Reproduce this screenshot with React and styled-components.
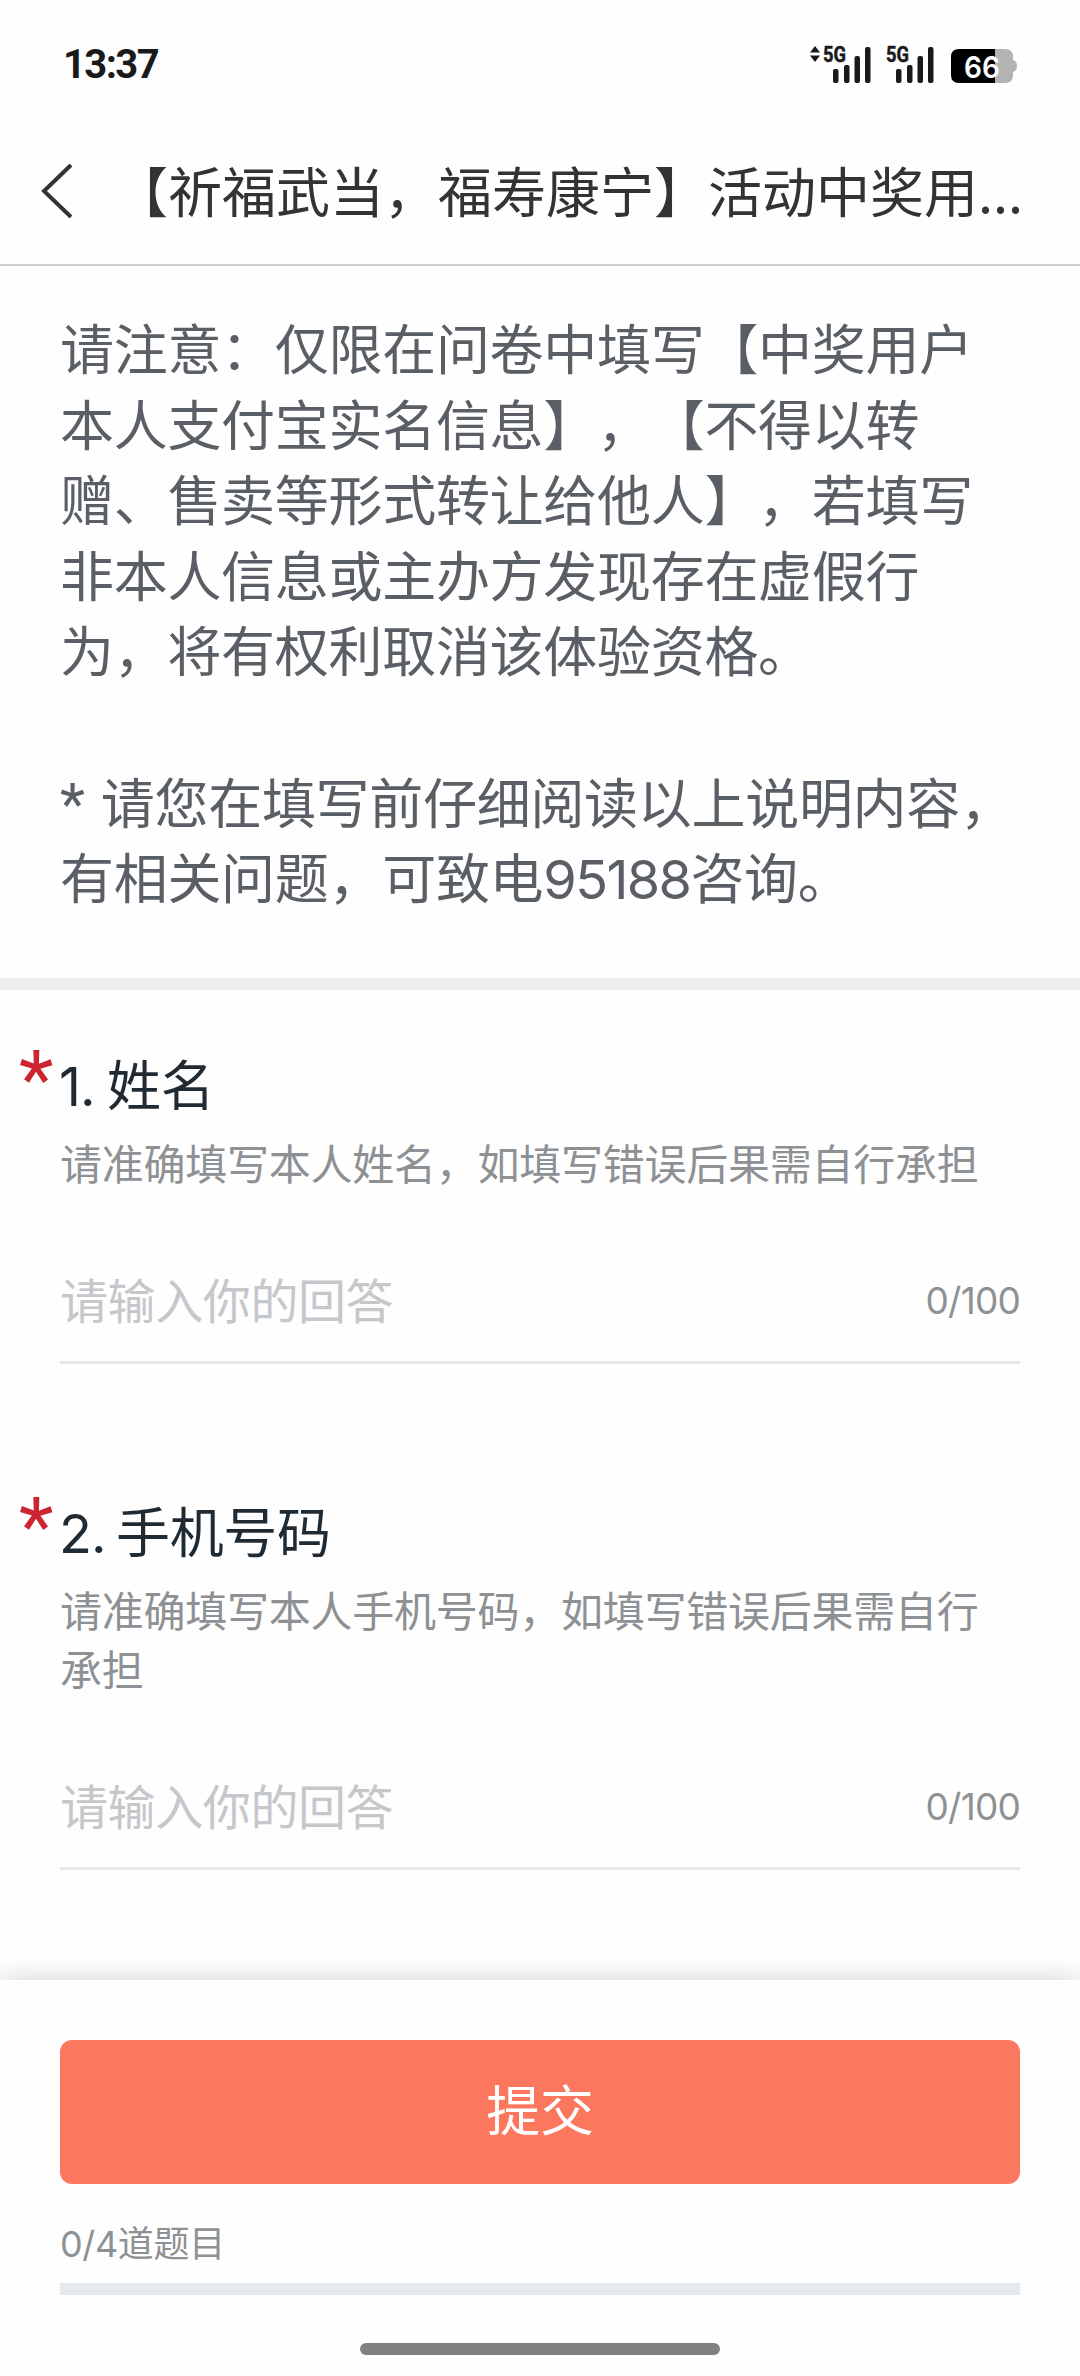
import React from 'react';
import styled, { createGlobalStyle } from 'styled-components';

const GlobalStyle = createGlobalStyle`
  * {
    box-sizing: border-box;
  }
  body {
    margin: 0;
    background: #fefefe;
    font-family: 'Noto Sans CJK SC', 'Liberation Sans', sans-serif;
    text-spacing-trim: space-all;
  }
`;

const Page = styled.div`
  width: 1080px;
  height: 2376px;
  display: flex;
  flex-direction: column;
  overflow: hidden;
  background: #fefefe;
`;

const StatusBar = styled.div`
  height: 118px;
  padding: 11px 63px 0 63px;
  display: flex;
  align-items: center;
  justify-content: space-between;
`;

const Time = styled.span`
  font-family: Roboto, sans-serif;
  font-size: 40px;
  line-height: 48px;
  font-weight: 700;
  letter-spacing: -1.6px;
  color: #1a1a1a;
`;

const StatusIcons = styled.div`
  display: flex;
  align-items: center;
`;

const NavBar = styled.header`
  height: 148px;
  padding: 0 40px 0 40px;
  display: flex;
  align-items: center;
  border-bottom: 2px solid #cfcfd2;
`;

const BackIcon = styled.svg`
  width: 34px;
  height: 54px;
  margin-right: 40px;
`;

const NavTitle = styled.h1`
  margin: 0;
  padding-bottom: 3px;
  font-size: 54px;
  line-height: 76px;
  font-weight: 400;
  letter-spacing: 0;
  white-space: nowrap;
  color: #333333;
`;

const Content = styled.main`
  height: 1714px;
  overflow: hidden;
`;

const Notice = styled.section`
  height: 712px;
  padding: 43px 60px 0;
  font-size: 54px;
  line-height: 75.6px;
  letter-spacing: -0.3px;
  white-space: nowrap;
  color: #5a5f66;
`;

const NoticeLine = styled.p`
  margin: 0;
  height: 75.6px;
`;

/* digits in the notice text, set a little tighter than the hanzi */
const Digits = styled.span`
  font-family: Inter, sans-serif;
  letter-spacing: -1.6px;
`;

const Star = styled.span`
  display: inline-block;
  width: 29px;
  font-family: Roboto, sans-serif;
  font-size: 58px;
`;

const Divider = styled.div`
  height: 12px;
  background: #ecedef;
`;

const Question = styled.section`
  padding: 54px 60px 0;
  height: ${(props) => props.$height}px;
`;

const QuestionTitle = styled.h2`
  margin: 0 0 7px;
  position: relative;
  font-size: 54px;
  line-height: 78px;
  font-weight: 400;
  letter-spacing: -0.35px;
  color: #1f2a33;
`;

const Required = styled.span`
  position: absolute;
  left: -41px;
  top: -9px;
  font-family: Roboto, sans-serif;
  font-size: 80px;
  line-height: 90px;
  color: #cc2430;
`;

const Num = styled.span`
  display: inline-block;
  width: ${(props) => props.$width}px;
  margin-left: -1px;
  font-family: Inter, sans-serif;
  letter-spacing: -1px;
`;

const Hint = styled.p`
  margin: 0;
  font-size: 42px;
  line-height: 58.8px;
  letter-spacing: -0.25px;
  white-space: nowrap;
  color: #8e9194;
`;

const Field = styled.div`
  height: 133px;
  margin-top: 39px;
  padding-top: 4px;
  display: flex;
  align-items: center;
  justify-content: space-between;
  border-bottom: 3px solid #e5e7e8;
`;

const Placeholder = styled.span`
  font-size: 48px;
  line-height: 68px;
  letter-spacing: -0.4px;
  color: #c5c7ca;
`;

const Counter = styled.span`
  padding-top: 6px;
  font-family: Inter, sans-serif;
  font-size: 37px;
  line-height: 52px;
  letter-spacing: -0.8px;
  color: #8e9194;
`;

const Footer = styled.footer`
  position: relative;
  height: 396px;
  padding: 60px 60px 0;
  background: #fefefe;
  box-shadow: 0 0 24px rgba(30, 40, 75, 0.2);
`;

const Submit = styled.button`
  display: block;
  width: 960px;
  height: 144px;
  padding: 0 0 8px;
  border: none;
  border-radius: 12px;
  background: #fb785e;
  color: #ffffff;
  font-family: inherit;
  font-size: 54px;
  line-height: 76px;
  letter-spacing: -0.35px;
`;

const Progress = styled.div`
  height: 52px;
  margin-top: 31px;
  font-size: 36px;
  line-height: 52px;
  letter-spacing: -0.3px;
  color: #8e9194;
`;

const ProgressCount = styled.span`
  font-family: Inter, sans-serif;
  letter-spacing: -0.4px;
`;

const Track = styled.div`
  height: 12px;
  margin-top: 16px;
  background: #e5eaef;
`;

const HomeBar = styled.div`
  width: 360px;
  height: 12px;
  margin: 48px auto 0;
  border-radius: 6px;
  background: #808080;
`;

const bars = [
  { x: 0, y: 24 },
  { x: 11, y: 20 },
  { x: 21.5, y: 11 },
  { x: 32, y: 2 },
];

const notice = [
  '请注意：仅限在问卷中填写【中奖用户',
  '本人支付宝实名信息】，【不得以转',
  '赠、售卖等形式转让给他人】，若填写',
  '非本人信息或主办方发现存在虚假行',
  '为，将有权利取消该体验资格。',
  '',
];

const questions = [
  {
    num: '1.',
    title: '姓名',
    numWidth: 48,
    height: 447,
    hint: ['请准确填写本人姓名，如填写错误后果需自行承担'],
  },
  {
    num: '2.',
    title: '手机号码',
    numWidth: 57,
    height: 506,
    hint: ['请准确填写本人手机号码，如填写错误后果需自行', '承担'],
  },
];

const Signal = ({ arrows }) => (
  <svg width={arrows ? 78 : 64} height="52" viewBox={arrows ? '-15 -6 78 52' : '0 -6 64 52'}>
    {arrows && <path d="M-13 7.5 L-8 1 L-3 7.5 Z M-13 10.5 L-8 17 L-3 10.5 Z" fill="#1a1a1a" />}
    <text
      x="0"
      y="17"
      fontFamily="Roboto, sans-serif"
      fontSize="22"
      fontWeight="700"
      textLength="23"
      lengthAdjust="spacingAndGlyphs"
      fill="#1a1a1a"
      stroke="#1a1a1a"
      strokeWidth="0.5"
    >
      5G
    </text>
    {bars.map((bar) => (
      <rect key={bar.x} x={bar.x + 10} y={bar.y} width="5.5" height={38 - bar.y} rx="2" fill="#1a1a1a" />
    ))}
  </svg>
);

const Battery = () => (
  <svg width="67" height="52" viewBox="-1 -6 67 52">
    <path d="M9 4 H54 Q62 4 62 12 V15 Q66 16 66 21 Q66 26 62 27 V30 Q62 38 54 38 H9 Z" fill="#b3b3b3" />
    <path d="M44 4 H8 Q0 4 0 12 V30 Q0 38 8 38 H44 Z" fill="#000000" />
    <text
      x="13"
      y="32.5"
      fontFamily="Inter, sans-serif"
      fontSize="30"
      fontWeight="600"
      textLength="36"
      lengthAdjust="spacingAndGlyphs"
      fill="#ffffff"
    >
      66
    </text>
  </svg>
);

const App = () => {
  return (
    <Page>
      <GlobalStyle />
      <StatusBar>
        <Time>13:37</Time>
        <StatusIcons>
          <Signal arrows />
          <Signal />
          <Battery />
        </StatusIcons>
      </StatusBar>
      <NavBar>
        <BackIcon viewBox="0 0 34 54">
          <path d="M31 1 L4 27 L31 53" fill="none" stroke="#333333" strokeWidth="4" />
        </BackIcon>
        <NavTitle>【祈福武当，福寿康宁】活动中奖用...</NavTitle>
      </NavBar>
      <Content>
        <Notice>
          {notice.map((line, i) => (
            <NoticeLine key={i}>{line}</NoticeLine>
          ))}
          <NoticeLine>
            <Star>*</Star> 请您在填写前仔细阅读以上说明内容，
          </NoticeLine>
          <NoticeLine>
            有相关问题，可致电<Digits>95188</Digits>咨询。
          </NoticeLine>
        </Notice>
        <Divider />
        {questions.map((q) => (
          <Question key={q.num} $height={q.height}>
            <QuestionTitle>
              <Required>*</Required>
              <Num $width={q.numWidth}>{q.num}</Num>
              {q.title}
            </QuestionTitle>
            {q.hint.map((line) => (
              <Hint key={line}>{line}</Hint>
            ))}
            <Field>
              <Placeholder>请输入你的回答</Placeholder>
              <Counter>0/100</Counter>
            </Field>
          </Question>
        ))}
      </Content>
      <Footer>
        <Submit>提交</Submit>
        <Progress>
          <ProgressCount>0/4</ProgressCount>道题目
        </Progress>
        <Track />
        <HomeBar />
      </Footer>
    </Page>
  );
};

export default App;
